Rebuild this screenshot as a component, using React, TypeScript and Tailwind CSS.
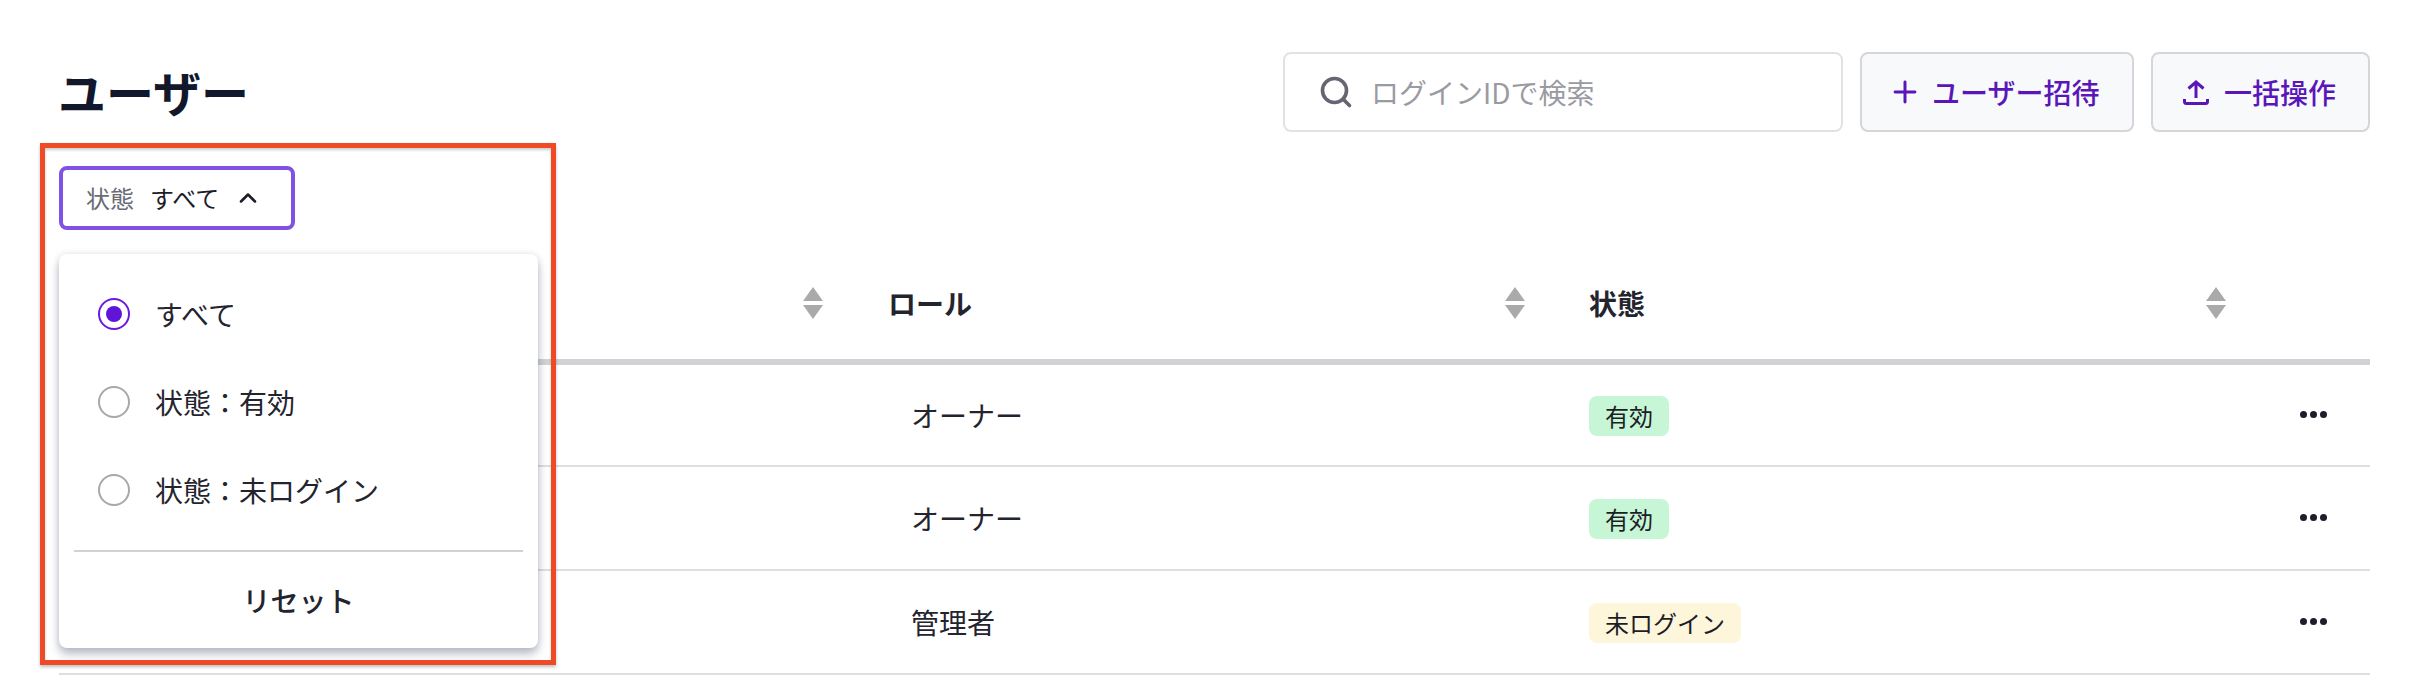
import { ChevronUp, Plus, Search } from "lucide-react";

const font = { fontFamily: '"Noto Sans CJK JP", "Noto Sans", sans-serif' };

const rows = [
  { role: "オーナー", status: "有効", ok: true },
  { role: "オーナー", status: "有効", ok: true },
  { role: "管理者", status: "未ログイン", ok: false },
];

function SortArrows() {
  return (
    <svg width="20" height="32" viewBox="0 0 20 32" className="shrink-0 text-[#aaaaaa]">
      <path d="M10 0L20 14H0Z M0 18H20L10 32Z" fill="currentColor" />
    </svg>
  );
}

function UploadIcon() {
  return (
    <svg width="26" height="27" viewBox="0 0 26 27" fill="none" stroke="currentColor" strokeWidth="3" className="shrink-0">
      <path d="M13 19V3M5.5 9.5L13 3l7.5 6.5" />
      <path d="M1.5 20v2.5a2 2 0 0 0 2 2h19a2 2 0 0 0 2-2V20" />
    </svg>
  );
}

function Radio({ checked, label }: { checked?: boolean; label: string }) {
  return (
    <div className="flex h-[88px] items-center gap-[25px] pl-[39px]">
      <span
        className={
          checked
            ? "flex h-8 w-8 items-center justify-center rounded-full border-2 border-[#6a1be0]"
            : "flex h-8 w-8 items-center justify-center rounded-full border-2 border-[#a8a8a8]"
        }
      >
        {checked && <span className="h-4 w-4 rounded-full bg-[#5f14d8]" />}
      </span>
      <span className="text-[28px] text-[#24242e]">{label}</span>
    </div>
  );
}

export default function App() {
  return (
    <div style={font} className="relative h-[676px] w-[2418px] overflow-hidden bg-white pl-[59px] pr-[48px] pt-[52px]">
      <header className="flex h-20 items-center justify-between">
        <h1 className="-ml-px pb-[2px] text-[48px] font-bold text-[#12182b]">ユーザー</h1>
        <div className="flex items-center gap-[17px]">
          <label className="flex h-20 w-[560px] items-center gap-[17px] rounded-lg border-2 border-[#e2e2e6] pl-[33px]">
            <Search size={36} strokeWidth={2.4} className="shrink-0 text-[#666672]" />
            <span className="text-[28px] text-[#9a9aa3]">ログインIDで検索</span>
          </label>
          <button type="button" className="flex h-20 w-[274px] items-center gap-[10px] rounded-lg border-2 border-[#d5d5da] bg-[#f8f9fb] pl-[26px] text-[28px] font-medium text-[#5a16b8]">
            <Plus size={34} strokeWidth={2.1} />
            ユーザー招待
          </button>
          <button type="button" className="flex h-20 w-[219px] items-center gap-[15px] rounded-lg border-2 border-[#d5d5da] bg-[#f8f9fb] pl-[30px] text-[28px] font-medium text-[#5a16b8]">
            <UploadIcon />
            一括操作
          </button>
        </div>
      </header>

      <div className="mt-[34px] flex">
        <button type="button" className="flex h-16 w-[236px] items-center gap-4 rounded-lg border-4 border-[#8052e4] pl-[23px]">
          <span className="text-[24px] text-[#6b6b76]">状態</span>
          <span className="text-[24px] text-[#1d1d28]">すべて</span>
          <ChevronUp size={28} strokeWidth={2.2} className="ml-[-1px] text-[#1d1d28]" />
        </button>
      </div>

      <div className="mt-5 text-[28px] text-[#24242e]">
        <div className="grid h-[115px] grid-cols-[814px_700px_701px_1fr] items-center border-b-[6px] border-[#d1d1d6] pb-[3px] font-bold">
          <div className="flex justify-end pr-[50px]">
            <SortArrows />
          </div>
          <div className="flex items-center justify-between pl-[15px] pr-[48px]">
            ロール
            <SortArrows />
          </div>
          <div className="flex items-center justify-between pl-4 pr-[48px]">
            状態
            <SortArrows />
          </div>
          <div />
        </div>
        {rows.map((row, i) => (
          <div
            key={i}
            className={
              i === 0
                ? "grid h-[102px] grid-cols-[814px_700px_701px_1fr] items-center border-b-2 border-[#dedee0] pt-[2px]"
                : "grid h-[104px] grid-cols-[814px_700px_701px_1fr] items-center border-b-2 border-[#dedee0] pt-[2px]"
            }
          >
            <div />
            <div className="mb-[2px] pl-[38px]">{row.role}</div>
            <div className="flex items-center pl-4">
              <span
                className={
                  row.ok
                    ? "flex h-10 items-center rounded-lg bg-[#c6f6d5] px-4 text-[24px] text-[#1d1d28]"
                    : "flex h-10 items-center rounded-lg bg-[#fdf6db] px-4 text-[24px] text-[#1d1d28]"
                }
              >
                {row.status}
              </span>
            </div>
            <div className="mb-1 flex items-center gap-[3px] pl-[26px]">
              <span className="h-[7px] w-[7px] rounded-full bg-[#1d1d2b]" />
              <span className="h-[7px] w-[7px] rounded-full bg-[#1d1d2b]" />
              <span className="h-[7px] w-[7px] rounded-full bg-[#1d1d2b]" />
            </div>
          </div>
        ))}
      </div>

      {/* open filter menu */}
      <div className="absolute left-[59px] top-[254px] h-[394px] w-[479px] rounded-lg bg-white pt-4 shadow-[0_6px_10px_rgba(60,70,100,0.35),0_0_6px_rgba(60,70,100,0.12)]">
        <Radio checked label="すべて" />
        <Radio label="状態：有効" />
        <Radio label="状態：未ログイン" />
        <div className="mx-[15px] mt-4 border-t-2 border-[#d1d1d6]" />
        <div className="flex h-[96px] items-center justify-center text-[28px] font-medium text-[#24242e]">リセット</div>
      </div>

      {/* annotation frame */}
      <div className="pointer-events-none absolute left-[40px] top-[143px] h-[522px] w-[516px] border-[5px] border-[#ef4a26] shadow-[0_2px_3px_rgba(0,0,0,0.25),inset_0_2px_3px_rgba(0,0,0,0.2)]" />
    </div>
  );
}
